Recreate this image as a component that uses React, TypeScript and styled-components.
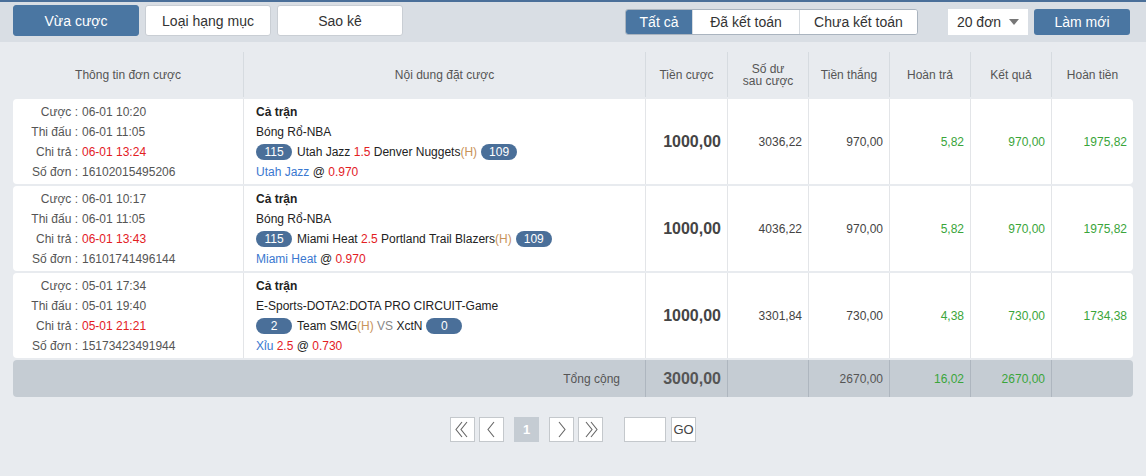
import React from "react";
import styled, { createGlobalStyle } from "styled-components";

const GlobalStyle = createGlobalStyle`
  html, body {
    margin: 0;
    padding: 0;
    background: #e8ebef;
    font-family: "Liberation Sans", Arial, sans-serif;
  }
`;

const BLUE = "#4a76a2";
const RED = "#e3201f";
const GREEN = "#3aa53a";

interface Bet {
  placed: string;
  match: string;
  paid: string;
  id: string;
  league: string;
  homeScore: string;
  awayScore: string;
  home: string;
  line?: string;
  away: string;
  homeMark: boolean;
  pick: string;
  pickLine?: string;
  odds: string;
  stake: string;
  balance: string;
  win: string;
  rebate: string;
  result: string;
  refund: string;
}

const bets: Bet[] = [
  {
    placed: "06-01 10:20",
    match: "06-01 11:05",
    paid: "06-01 13:24",
    id: "16102015495206",
    league: "Bóng Rổ-NBA",
    homeScore: "115",
    awayScore: "109",
    home: "Utah Jazz",
    line: "1.5",
    away: "Denver Nuggets",
    homeMark: false,
    pick: "Utah Jazz",
    odds: "0.970",
    stake: "1000,00",
    balance: "3036,22",
    win: "970,00",
    rebate: "5,82",
    result: "970,00",
    refund: "1975,82",
  },
  {
    placed: "06-01 10:17",
    match: "06-01 11:05",
    paid: "06-01 13:43",
    id: "16101741496144",
    league: "Bóng Rổ-NBA",
    homeScore: "115",
    awayScore: "109",
    home: "Miami Heat",
    line: "2.5",
    away: "Portland Trail Blazers",
    homeMark: false,
    pick: "Miami Heat",
    odds: "0.970",
    stake: "1000,00",
    balance: "4036,22",
    win: "970,00",
    rebate: "5,82",
    result: "970,00",
    refund: "1975,82",
  },
  {
    placed: "05-01 17:34",
    match: "05-01 19:40",
    paid: "05-01 21:21",
    id: "15173423491944",
    league: "E-Sports-DOTA2:DOTA PRO CIRCUIT-Game",
    homeScore: "2",
    awayScore: "0",
    home: "Team SMG",
    away: "XctN",
    homeMark: true,
    pick: "Xỉu",
    pickLine: "2.5",
    odds: "0.730",
    stake: "1000,00",
    balance: "3301,84",
    win: "730,00",
    rebate: "4,38",
    result: "730,00",
    refund: "1734,38",
  },
];

const COLS = "230px 402px 82px 81px 81px 81px 81px 82px";

// thanh công cụ trên cùng
const Toolbar = styled.div`
  height: 40px;
  border-top: 2px solid #4a6f99;
  background: #d9dee4;
  display: flex;
  align-items: center;
  padding: 0 16px 0 13px;
`;

const TabGroup = styled.div`
  display: flex;
  gap: 6px;
  align-self: flex-start;
  margin-top: 3px;
`;

const TabButton = styled.button<{ $active?: boolean }>`
  width: 126px;
  height: 31px;
  border-radius: 3px;
  border: 1px solid ${(p) => (p.$active ? BLUE : "#c9ced4")};
  background: ${(p) => (p.$active ? BLUE : "#fff")};
  color: ${(p) => (p.$active ? "#fff" : "#333")};
  font-family: inherit;
  font-size: 14px;
  padding: 0;
`;

const Spacer = styled.div`
  flex: 1;
`;

const Segmented = styled.div`
  display: flex;
  height: 26px;
  border: 1px solid #aab4bf;
  border-radius: 3px;
  overflow: hidden;
  background: #fff;
  box-sizing: border-box;
`;

const Segment = styled.button<{ $active?: boolean; $w: number }>`
  width: ${(p) => p.$w}px;
  border: none;
  border-left: ${(p) => (p.$active ? "none" : "1px solid #d6dbe0")};
  background: ${(p) => (p.$active ? BLUE : "#fff")};
  color: ${(p) => (p.$active ? "#fff" : "#333")};
  font-family: inherit;
  font-size: 14px;
  padding: 0;
  &:first-child {
    border-left: none;
  }
`;

const Select = styled.div`
  margin-left: 30px;
  width: 80px;
  height: 26px;
  background: #fff;
  display: flex;
  align-items: center;
  justify-content: center;
  gap: 8px;
  font-size: 14px;
  color: #333;
`;

const Caret = styled.span`
  width: 0;
  height: 0;
  border-left: 5px solid transparent;
  border-right: 5px solid transparent;
  border-top: 6px solid #777;
`;

const RefreshButton = styled.button`
  margin-left: 6px;
  width: 96px;
  height: 26px;
  border: none;
  border-radius: 3px;
  background: ${BLUE};
  color: #fff;
  font-family: inherit;
  font-size: 14px;
  padding: 0;
`;

const Content = styled.div`
  padding: 10px 13px 0;
`;

const Table = styled.div`
  width: 1120px;
  display: flex;
  flex-direction: column;
  gap: 2px;
`;

const HeaderRow = styled.div`
  display: grid;
  grid-template-columns: ${COLS};
  height: 45px;
`;

const HeaderCell = styled.div`
  display: flex;
  align-items: center;
  justify-content: center;
  text-align: center;
  font-size: 12px;
  line-height: 12px;
  color: #555;
  border-left: 1px solid #d6dbe0;
  &:first-child {
    border-left: none;
  }
`;

const Row = styled.div`
  display: grid;
  grid-template-columns: ${COLS};
  height: 85px;
  background: #fff;
  border-radius: 4px;
`;

const Cell = styled.div<{ $color?: string }>`
  border-left: 1px solid #e3e5e8;
  display: flex;
  align-items: center;
  justify-content: flex-end;
  padding-right: 6px;
  font-size: 12px;
  color: ${(p) => p.$color || "#444"};
  &:first-child {
    border-left: none;
  }
`;

const Amount = styled(Cell)`
  font-size: 16px;
  font-weight: bold;
  color: #444;
`;

const InfoCell = styled.div`
  display: grid;
  grid-template-columns: 65px 1fr;
  grid-auto-rows: 20px;
  align-content: center;
  column-gap: 4px;
  font-size: 12px;
  color: #555;
`;

const Label = styled.span`
  text-align: right;
  line-height: 20px;
`;

const Value = styled.span<{ $red?: boolean }>`
  line-height: 20px;
  color: ${(p) => (p.$red ? RED : "#555")};
`;

const DetailCell = styled.div`
  border-left: 1px solid #e3e5e8;
  padding-left: 12px;
  display: flex;
  flex-direction: column;
  justify-content: center;
  font-size: 12px;
  color: #222;
`;

const Line = styled.div<{ $bold?: boolean }>`
  height: 20px;
  display: flex;
  align-items: center;
  gap: 4px;
  font-weight: ${(p) => (p.$bold ? "bold" : "normal")};
`;

const Badge = styled.span`
  min-width: 36px;
  height: 16px;
  padding: 0 4px;
  box-sizing: border-box;
  border-radius: 8px;
  background: #4a6f99;
  color: #fff;
  font-size: 12px;
  display: inline-flex;
  align-items: center;
  justify-content: center;
  margin-right: 1px;
`;

const Tone = styled.span<{ $c: string }>`
  color: ${(p) => p.$c};
`;

const TotalRow = styled.div`
  display: grid;
  grid-template-columns: 632px 82px 81px 81px 81px 81px 82px;
  height: 37px;
  background: #c5ccd3;
  border-radius: 4px;
`;

const TotalCell = styled.div<{ $color?: string; $big?: boolean }>`
  border-left: 1px solid #aeb6bf;
  display: flex;
  align-items: center;
  justify-content: flex-end;
  padding-right: 6px;
  font-size: ${(p) => (p.$big ? 16 : 12)}px;
  font-weight: ${(p) => (p.$big ? "bold" : "normal")};
  color: ${(p) => p.$color || "#555"};
  &:first-child {
    border-left: none;
    padding-right: 25px;
  }
`;

// phân trang
const Pager = styled.div`
  display: flex;
  align-items: center;
  justify-content: center;
  margin-top: 20px;
`;

const PageButton = styled.button<{ $active?: boolean; $gap?: number }>`
  width: 25px;
  height: 25px;
  margin-left: ${(p) => p.$gap ?? 4}px;
  border: 1px solid ${(p) => (p.$active ? "#c5ccd3" : "#c4c8cc")};
  background: ${(p) => (p.$active ? "#c5ccd3" : "#fff")};
  color: ${(p) => (p.$active ? "#fff" : "#555")};
  font-family: inherit;
  font-size: 13px;
  font-weight: ${(p) => (p.$active ? "bold" : "normal")};
  padding: 0;
  display: flex;
  align-items: center;
  justify-content: center;
  &:first-child {
    margin-left: 0;
  }
`;

const PageInput = styled.input`
  margin-left: 21px;
  width: 42px;
  height: 25px;
  box-sizing: border-box;
  border: 1px solid #c4c8cc;
  background: #fff;
  padding: 0;
`;

const GoButton = styled(PageButton)`
  color: #444;
  font-size: 13px;
`;

const Chevron = ({ dir, double }: { dir: "l" | "r"; double?: boolean }) => {
  const single = dir === "l" ? "M13 5 L7 12.5 L13 20" : "M8 5 L14 12.5 L8 20";
  const left = "M10 5 L4 12.5 L10 20 M15 5 L9 12.5 L15 20";
  const right = "M6 5 L12 12.5 L6 20 M11 5 L17 12.5 L11 20";
  return (
    <svg width="21" height="25" viewBox="0 0 21 25" fill="none">
      <path
        d={double ? (dir === "l" ? left : right) : single}
        stroke="#666"
        strokeWidth="1.1"
      />
    </svg>
  );
};

const BetRow = ({ bet }: { bet: Bet }) => (
  <Row>
    <InfoCell>
      <Label>Cược :</Label>
      <Value>{bet.placed}</Value>
      <Label>Thi đấu :</Label>
      <Value>{bet.match}</Value>
      <Label>Chi trả :</Label>
      <Value $red>{bet.paid}</Value>
      <Label>Số đơn :</Label>
      <Value>{bet.id}</Value>
    </InfoCell>
    <DetailCell>
      <Line $bold>Cả trận</Line>
      <Line>{bet.league}</Line>
      <Line>
        <Badge>{bet.homeScore}</Badge>
        <span>
          {bet.home}
          {bet.homeMark && <Tone $c="#c9935a">(H)</Tone>}
          {bet.line ? (
            <>
              {" "}
              <Tone $c={RED}>{bet.line}</Tone>{" "}
            </>
          ) : (
            <>
              {" "}
              <Tone $c="#888">VS</Tone>{" "}
            </>
          )}
          {bet.away}
          {!bet.homeMark && <Tone $c="#c9935a">(H)</Tone>}
        </span>
        <Badge>{bet.awayScore}</Badge>
      </Line>
      <Line>
        <span>
          <Tone $c="#3a78d0">{bet.pick}</Tone>
          {bet.pickLine && (
            <>
              {" "}
              <Tone $c={RED}>{bet.pickLine}</Tone>
            </>
          )}{" "}
          @ <Tone $c={RED}>{bet.odds}</Tone>
        </span>
      </Line>
    </DetailCell>
    <Amount>{bet.stake}</Amount>
    <Cell>{bet.balance}</Cell>
    <Cell>{bet.win}</Cell>
    <Cell $color={GREEN}>{bet.rebate}</Cell>
    <Cell $color={GREEN}>{bet.result}</Cell>
    <Cell $color={GREEN}>{bet.refund}</Cell>
  </Row>
);

export default function App() {
  return (
    <>
      <GlobalStyle />
      <Toolbar>
        <TabGroup>
          <TabButton $active>Vừa cược</TabButton>
          <TabButton>Loại hạng mục</TabButton>
          <TabButton>Sao kê</TabButton>
        </TabGroup>
        <Spacer />
        <Segmented>
          <Segment $active $w={66}>Tất cả</Segment>
          <Segment $w={107}>Đã kết toán</Segment>
          <Segment $w={118}>Chưa kết toán</Segment>
        </Segmented>
        <Select>
          20 đơn <Caret />
        </Select>
        <RefreshButton>Làm mới</RefreshButton>
      </Toolbar>
      <Content>
        <Table>
          <HeaderRow>
            <HeaderCell>Thông tin đơn cược</HeaderCell>
            <HeaderCell>Nội dung đặt cược</HeaderCell>
            <HeaderCell>Tiền cược</HeaderCell>
            <HeaderCell>
              Số dư
              <br />
              sau cược
            </HeaderCell>
            <HeaderCell>Tiền thắng</HeaderCell>
            <HeaderCell>Hoàn trả</HeaderCell>
            <HeaderCell>Kết quả</HeaderCell>
            <HeaderCell>Hoàn tiền</HeaderCell>
          </HeaderRow>
          {bets.map((b) => (
            <BetRow key={b.id} bet={b} />
          ))}
          <TotalRow>
            <TotalCell>Tổng cộng</TotalCell>
            <TotalCell $big>3000,00</TotalCell>
            <TotalCell />
            <TotalCell>2670,00</TotalCell>
            <TotalCell $color={GREEN}>16,02</TotalCell>
            <TotalCell $color={GREEN}>2670,00</TotalCell>
            <TotalCell />
          </TotalRow>
        </Table>
        <Pager>
          <PageButton>
            <Chevron dir="l" double />
          </PageButton>
          <PageButton>
            <Chevron dir="l" />
          </PageButton>
          <PageButton $active $gap={10}>
            1
          </PageButton>
          <PageButton $gap={10}>
            <Chevron dir="r" />
          </PageButton>
          <PageButton>
            <Chevron dir="r" double />
          </PageButton>
          <PageInput />
          <GoButton $gap={5}>GO</GoButton>
        </Pager>
      </Content>
    </>
  );
}
